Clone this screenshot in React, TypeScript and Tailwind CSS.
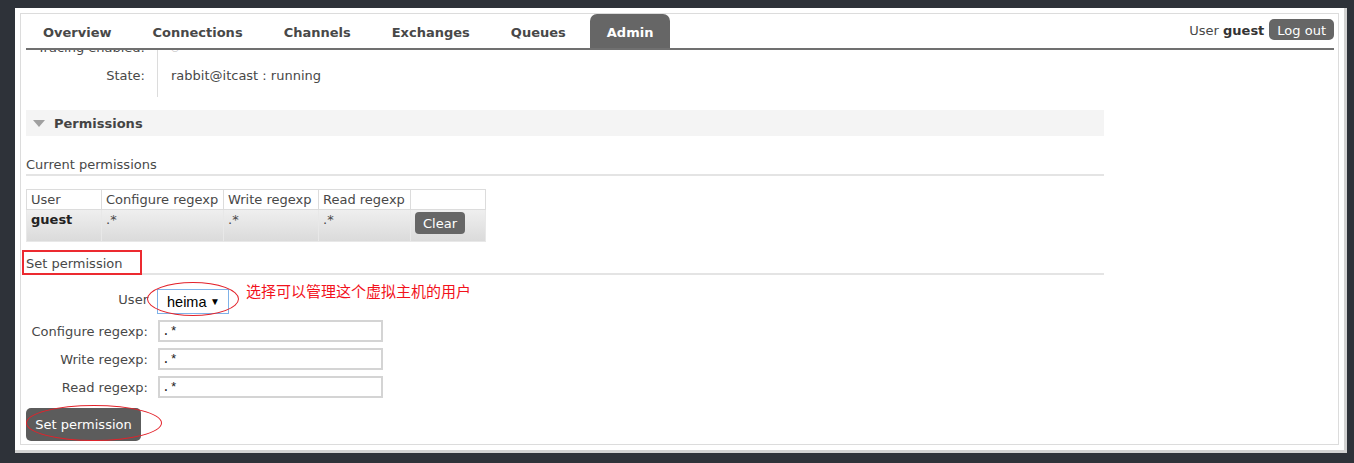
const tabs = ["Overview", "Connections", "Channels", "Exchanges", "Queues", "Admin"];

function Header() {
  return (
    <div className="ml-[5px] mr-[4px] flex justify-between border-b-2 border-[#707070]">
      <ul className="flex items-end">
        {tabs.map((t) => (
          <li
            key={t}
            className={
              t === "Admin"
                ? "mr-[7px] flex h-[34px] items-center rounded-t-[7px] bg-[#666] px-[17px] pt-[3px] font-bold text-white"
                : "mr-[7px] flex h-[34px] items-center px-[17px] pt-[3px] font-bold text-[#484848]"
            }
          >
            {t}
          </li>
        ))}
      </ul>
      <div className="mt-[5px] flex items-start gap-[5px] self-start">
        <span className="pt-[1px] leading-[21px]">
          User <b className="text-[#333]">guest</b>
        </span>
        <button className="h-[21px] rounded-[5px] bg-[#666] px-[8px] pt-[1px] leading-[21px] text-white">
          Log out
        </button>
      </div>
    </div>
  );
}

function NodeInfo() {
  return (
    <div className="-mt-[16px] flex">
      <div className="w-[132px] border-r border-[#dcdcdc] pb-[7px] pr-[12px] text-right">
        <div className="flex h-[28px] items-center justify-end">Tracing enabled:</div>
        <div className="flex h-[28px] items-center justify-end">State:</div>
      </div>
      <div className="pl-[13px] pb-[7px]">
        <div className="flex h-[28px] items-center text-[9px] text-[#bbb]">○</div>
        <div className="flex h-[28px] items-center">rabbit@itcast : running</div>
      </div>
    </div>
  );
}

function CurrentPermissions() {
  const th = "h-[20px] whitespace-nowrap border border-[#dcdcdc] bg-white px-[4px] pt-[1px] text-left font-normal";
  const td = "whitespace-nowrap border border-[#e8e8e8] px-[4px] pt-[2px] align-top";
  return (
    <table className="mt-[13px] table-fixed border-collapse">
      <thead>
        <tr>
          <th className={th + " w-[75px]"}>User</th>
          <th className={th + " w-[122px]"}>Configure regexp</th>
          <th className={th + " w-[95px]"}>Write regexp</th>
          <th className={th + " w-[92px]"}>Read regexp</th>
          <th className={th + " w-[75px]"}></th>
        </tr>
      </thead>
      <tbody>
        <tr className="h-[32px] bg-gradient-to-b from-[#efefef] to-[#dadada]">
          <td className={td + " font-bold text-[#222]"}>guest</td>
          <td className={td}>.*</td>
          <td className={td}>.*</td>
          <td className={td}>.*</td>
          <td className={td + " pl-[4px] pt-[2px]"}>
            <button className="h-[22px] rounded-[4px] bg-[#666] px-[8px] pt-[1px] text-white">Clear</button>
          </td>
        </tr>
      </tbody>
    </table>
  );
}

function Field({ label }: { label: string }) {
  return (
    <>
      <span className="pt-[1px] text-right">{label}</span>
      <input
        readOnly
        defaultValue=".*"
        className="h-[22px] w-[225px] border-2 border-[#d4d4d4] px-[2px] font-['Liberation_Mono',monospace] text-[13px] text-[#222] outline-none"
      />
    </>
  );
}

function SetPermission() {
  return (
    <div>
      <div className="mt-[14px] grid grid-cols-[122px_auto] items-center justify-start gap-x-[10px] gap-y-[6px]">
        <span className="-mt-[4px] text-right">User</span>
        <div className="-ml-[1px] flex h-[25px] w-[72px] items-center justify-between border border-[#7fb2e8] bg-white pl-[9px] pr-[8px] font-['Liberation_Sans',sans-serif] text-[14.5px] text-black">
          <span>heima</span>
          <span className="text-[10px]">▼</span>
        </div>
        <Field label="Configure regexp:" />
        <Field label="Write regexp:" />
        <Field label="Read regexp:" />
      </div>
      <button className="mt-[10px] h-[33px] w-[115px] rounded-[5px] bg-[#5c5c5c] pt-[1px] text-white">
        Set permission
      </button>
    </div>
  );
}

function Annotations() {
  return (
    <>
      <div className="absolute left-[22px] top-[250px] h-[25px] w-[120px] border-2 border-[#ec2a30]" />
      <div className="absolute left-[147px] top-[282px] h-[34px] w-[92px] rounded-[50%] border-[1.5px] border-[#e3222a]" />
      <div className="absolute left-[26px] top-[405px] h-[36px] w-[136px] rounded-[50%] border-[1.5px] border-[#e3222a]" />
      <div className="absolute left-[246px] top-[282px] font-['Noto_Sans_CJK_SC',serif] text-[15px] leading-[18px] text-[#f2121c]">
        选择可以管理这个虚拟主机的用户
      </div>
    </>
  );
}

export default function App() {
  return (
    <div className="relative h-[463px] w-[1354px] overflow-hidden bg-[#2e3239] pl-[15px] pt-[8px] font-['DejaVu_Sans',sans-serif] text-[13px] leading-[16px] text-[#484848]">
      <div className="h-[445px] w-[1332px] border-b-[3px] border-r-[3px] border-[#d2d2d2] bg-white p-[5px]">
        <div className="flex h-full flex-col overflow-hidden border border-[#dcdcdc]">
          <Header />
          <main className="flex-1 overflow-hidden pl-[5px]">
            <NodeInfo />
            <div className="w-[1078px]">
              <div className="mt-[13px] flex h-[26px] items-center bg-[#f4f4f4] pl-[7px] pt-[1px]">
                <svg width="12" height="8" viewBox="0 0 12 8">
                  <polygon points="0,0 12,0 6,7" fill="#a0a0a0" />
                </svg>
                <span className="ml-[9px] font-bold text-[#444]">Permissions</span>
              </div>
              <h3 className="mt-[21px] border-b-2 border-[#e4e4e4] pb-[1px]">Current permissions</h3>
              <CurrentPermissions />
              <h3 className="mt-[14px] border-b-2 border-[#e4e4e4] pb-[1px]">Set permission</h3>
            </div>
            <SetPermission />
          </main>
        </div>
      </div>
      <Annotations />
    </div>
  );
}
